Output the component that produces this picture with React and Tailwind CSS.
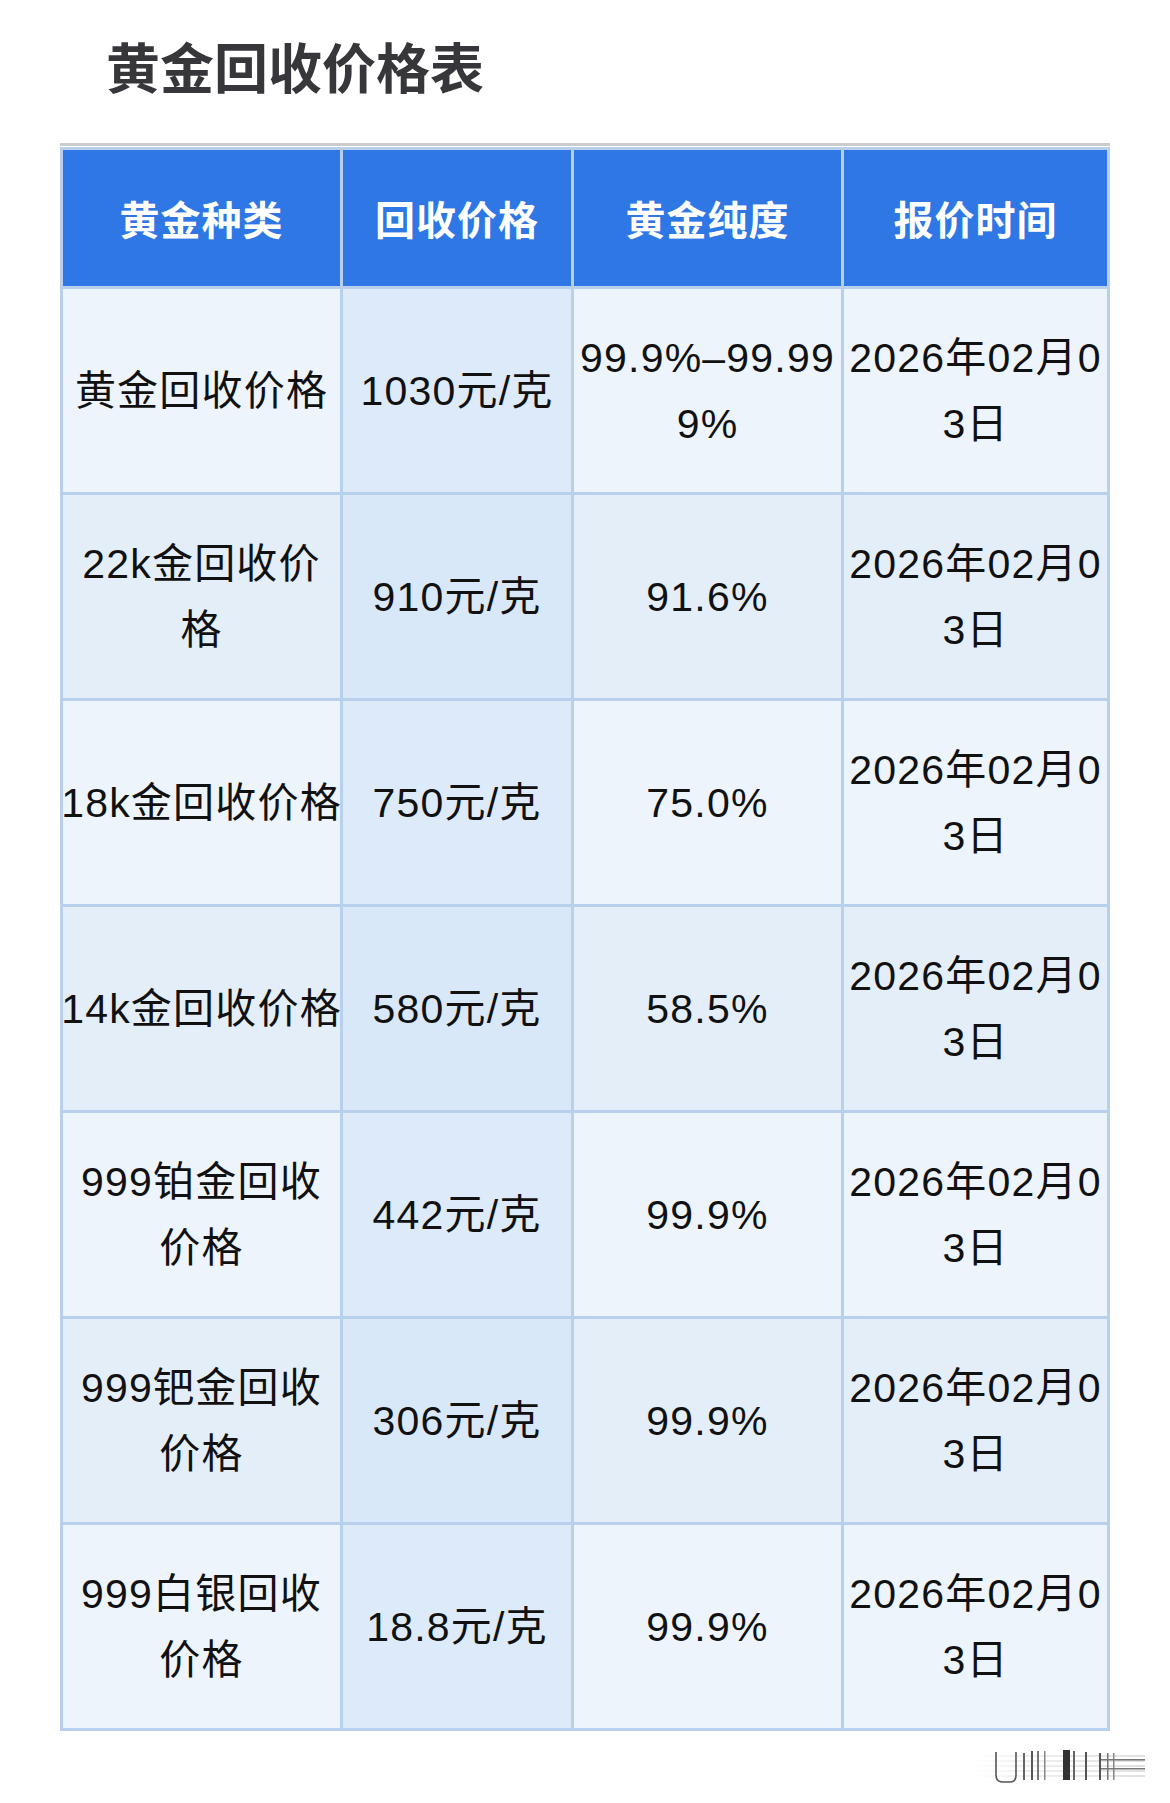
import React from 'react';

const DATE = ['2026年02月0', '3日'];

const HEAD = ['黄金种类', '回收价格', '黄金纯度', '报价时间'];

const ROWS = [
  [['黄金回收价格'], ['1030元/克'], ['99.9%–99.99', '9%'], DATE],
  [['22k金回收价', '格'], ['910元/克'], ['91.6%'], DATE],
  [['18k金回收价格'], ['750元/克'], ['75.0%'], DATE],
  [['14k金回收价格'], ['580元/克'], ['58.5%'], DATE],
  [['999铂金回收', '价格'], ['442元/克'], ['99.9%'], DATE],
  [['999钯金回收', '价格'], ['306元/克'], ['99.9%'], DATE],
  [['999白银回收', '价格'], ['18.8元/克'], ['99.9%'], DATE],
];

function Watermark() {
  return (
    <svg width="175" height="40" viewBox="0 0 175 40" className="block">
      <defs>
        <linearGradient id="fade" x1="0" x2="1" y1="0" y2="0">
          <stop offset="0" stopColor="#000" stopOpacity="0" />
          <stop offset="0.3" stopColor="#000" stopOpacity="0.06" />
          <stop offset="1" stopColor="#000" stopOpacity="0.12" />
        </linearGradient>
      </defs>
      {[8, 13, 18, 23, 28].map((y) => (
        <rect key={y} x="0" y={y} width="172" height="2" fill="url(#fade)" />
      ))}
      <path d="M23 5 V28 Q23 35 30 35 H37 Q43 35 43 28 V5" fill="none" stroke="#555" strokeWidth="1.6" />
      <rect x="50" y="6" width="2" height="27" fill="#666" />
      <rect x="58" y="4" width="2" height="29" fill="#555" />
      <rect x="64" y="4" width="2" height="29" fill="#777" />
      <rect x="71" y="4" width="1.5" height="29" fill="#888" />
      <rect x="90" y="3" width="7" height="30" fill="#333" />
      <rect x="100" y="4" width="2" height="29" fill="#666" />
      <rect x="112" y="5" width="2" height="28" fill="#555" />
      <rect x="126" y="6" width="2" height="27" fill="#555" />
      <rect x="134" y="6" width="1.5" height="27" fill="#777" />
      <rect x="140" y="6" width="1.5" height="27" fill="#888" />
      <rect x="128" y="12" width="44" height="1.5" fill="#777" />
      <rect x="128" y="21" width="44" height="1.5" fill="#777" />
    </svg>
  );
}

function Cell({ lines, shade }) {
  return (
    <div className={`flex h-[203px] flex-col items-center justify-center text-[41px] leading-[66px] tracking-[1.2px] text-[#111] ${shade}`}>
      {lines.map((l, i) => (
        <span key={i} className="whitespace-nowrap">
          {l}
        </span>
      ))}
    </div>
  );
}

export default function App() {
  return (
    <div className="min-h-[1803px] w-[1170px] bg-white font-['Liberation_Sans','Noto_Sans_CJK_SC',sans-serif]">
      <h1 className="pl-[106px] pt-[36px] font-['Noto_Sans_CJK_SC',sans-serif] text-[54px] font-bold leading-[60px] text-[#37373b]">
        黄金回收价格表
      </h1>

      <div className="ml-[60px] mt-[47px] w-[1050px]">
        <div className="h-[3px] bg-[#cbcbcb]" />
        <div className="mt-[1px] grid grid-cols-[277px_228px_267px_263px] gap-[3px] bg-[#b8d0ec] p-[3px]">
          {HEAD.map((h) => (
            <div
              key={h}
              className="flex h-[136px] items-center justify-center bg-[#2e77e5] font-['Noto_Sans_CJK_SC',sans-serif] text-[40px] font-bold tracking-[1px] text-white"
            >
              {h}
            </div>
          ))}
          {ROWS.map((row, r) =>
            row.map((lines, c) => {
              const odd = r % 2 === 0;
              let shade = odd ? 'bg-[#edf4fc]' : 'bg-[#e4eef9]';
              if (c === 1) shade = odd ? 'bg-[#dceaf9]' : 'bg-[#d9e8f8]';
              return <Cell key={`${r}-${c}`} lines={lines} shade={shade} />;
            })
          )}
        </div>
      </div>

      <div className="mt-[16px] flex justify-end pr-[22px]">
        <Watermark />
      </div>
    </div>
  );
}
